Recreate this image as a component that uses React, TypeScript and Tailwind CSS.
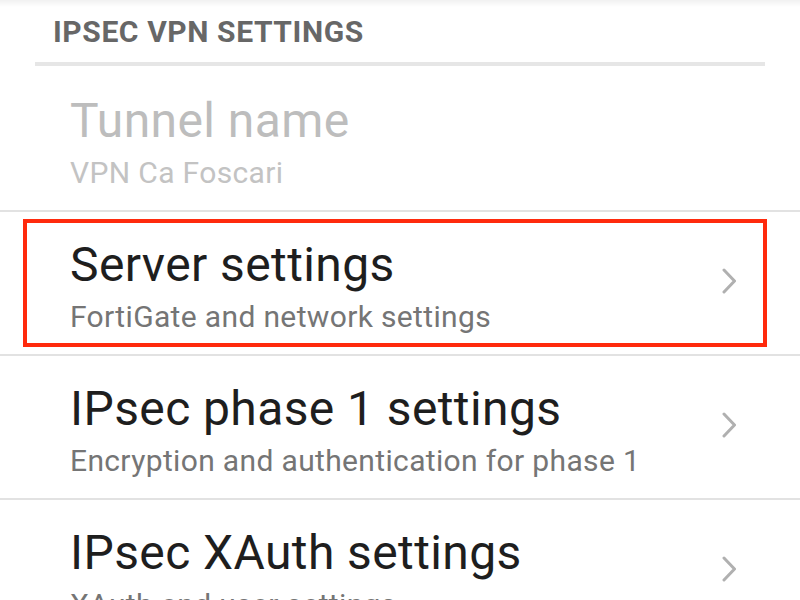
import type { ReactNode } from 'react';

interface SettingRowProps {
  title: string;
  summary: string;
  disabled?: boolean;
  chevron?: boolean;
  highlight?: boolean;
  first?: boolean;
}

const Chevron = () => (
  <svg width="14" height="26" viewBox="0 0 14 26" className="mb-[10px] shrink-0">
    <polyline points="2,2 12.5,13 2,24" fill="none" stroke="#b0b0b0" strokeWidth="3" strokeLinecap="round" strokeLinejoin="round" />
  </svg>
);

const SettingRow = ({ title, summary, disabled, chevron, highlight, first }: SettingRowProps) => {
  return (
    <div
      className={`relative flex items-center justify-between pl-[70px] pr-[64px] pb-[19px] ${first ? 'pt-[27px]' : 'pt-[25px]'}`}
    >
      <div className="min-w-0">
        <p className={`text-[48px] leading-[56px] tracking-[0.4px] whitespace-nowrap ${disabled ? 'text-[#bdbdbd]' : 'text-[#1e1e1e]'}`}>{title}</p>
        <p className={`mt-[6px] text-[30px] leading-[36px] tracking-[0.35px] whitespace-nowrap ${disabled ? 'text-[#c3c3c3]' : 'text-[#757575]'}`}>{summary}</p>
      </div>
      {chevron && <Chevron />}
      {highlight && (
        <div className="absolute left-[23px] right-[33px] top-[7px] bottom-[7px] border-[4px] border-[#ff2a0d] pointer-events-none" />
      )}
    </div>
  );
};

const Divider = (): ReactNode => <div className="h-[2px] bg-[#e2e2e2]" />;

export default function App() {
  return (
    <div className="w-[800px] h-[600px] overflow-hidden bg-white font-['Roboto','Liberation_Sans',sans-serif]">
      <div className="bg-[linear-gradient(#f1f1f1,#ffffff_7px)] pl-[53px] pt-[14px] pb-[12px]">
        <h2 className="text-[30px] leading-[36px] font-bold tracking-[0.6px] text-[#676767]">IPSEC VPN SETTINGS</h2>
      </div>
      <div className="mx-[35px] h-[4px] bg-[#e6e6e6]" />

      <SettingRow title="Tunnel name" summary="VPN Ca Foscari" disabled first />
      <Divider />
      <SettingRow title="Server settings" summary="FortiGate and network settings" chevron highlight />
      <Divider />
      <SettingRow title="IPsec phase 1 settings" summary="Encryption and authentication for phase 1" chevron />
      <Divider />
      <SettingRow title="IPsec XAuth settings" summary="XAuth and user settings" chevron />
    </div>
  );
}
